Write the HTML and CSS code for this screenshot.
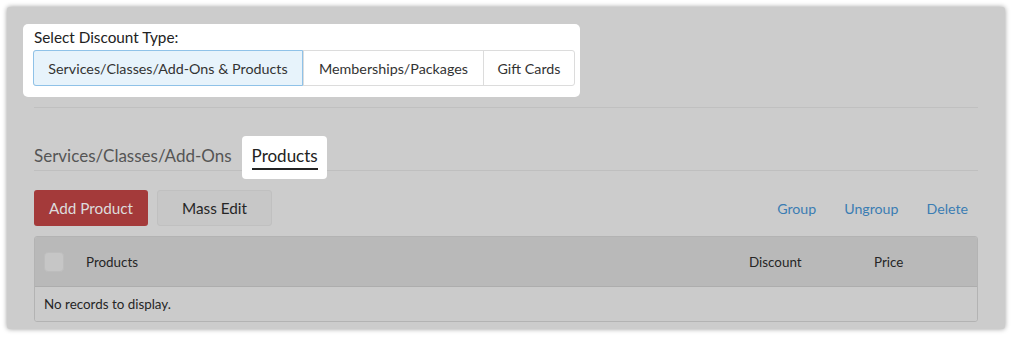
FILE: index.html
```html
<!DOCTYPE html>
<html>
<head>
<meta charset="utf-8">
<link rel="stylesheet" href="styles.css">
</head>
<body>
<div class="panel">
  <div class="discount-box">
    <div class="discount-label">Select Discount Type:</div>
    <div class="seg">
      <div class="seg-btn active">Services/Classes/Add-Ons &amp; Products</div>
      <div class="seg-btn">Memberships/Packages</div>
      <div class="seg-btn">Gift Cards</div>
    </div>
  </div>
  <div class="divider"></div>
  <div class="tabs">
    <div class="tab">Services/Classes/Add-Ons</div>
    <div class="tab active"><span class="tab-text">Products</span></div>
  </div>
  <div class="toolbar">
    <div class="btn btn-red">Add Product</div>
    <div class="btn btn-grey">Mass Edit</div>
    <div class="links">
      <span class="link">Group</span>
      <span class="link">Ungroup</span>
      <span class="link">Delete</span>
    </div>
  </div>
  <div class="table">
    <div class="thead">
      <div class="cell-check"><span class="checkbox"></span></div>
      <div class="cell-name">Products</div>
      <div class="cell-disc">Discount</div>
      <div class="cell-price">Price</div>
    </div>
    <div class="tbody">No records to display.</div>
  </div>
</div>
</body>
</html>
```
FILE: styles.css
```css
*, *::before, *::after {
  box-sizing: border-box;
}
html, body {
  margin: 0;
  padding: 0;
  background: #ffffff;
}
body {
  font-family: Lato, "Liberation Sans", sans-serif;
  color: #262626;
  padding: 7px 9px 8px 7px;
}
.panel {
  width: 998px;
  height: 322px;
  background: #cccccc;
  border-radius: 3px;
  box-shadow: 0 0 5px rgba(0, 0, 0, 0.4);
  padding: 17px 27px 0 27px;
}
.discount-box {
  display: inline-block;
  margin-left: -11px;
  width: 557px;
  background: #ffffff;
  border-radius: 5px;
  padding: 4px 5px 11px 10px;
}
.discount-label {
  font-size: 15.3px;
  line-height: 19px;
  padding-left: 1px;
  margin-bottom: 3px;
  color: #222;
}
.seg {
  display: flex;
  height: 36px;
  border: 1px solid #dcdcdc;
  border-radius: 3px;
}
.seg-btn {
  display: flex;
  align-items: center;
  justify-content: center;
  font-size: 14.3px;
  color: #333;
  border-left: 1px solid #dcdcdc;
}
.seg-btn:nth-child(1) { width: 269px; border-left: none; }
.seg-btn:nth-child(2) { width: 180px; }
.seg-btn:nth-child(3) { flex: 1; }
.seg-btn.active {
  background: #e7f3fb;
  margin: -1px 0 -1px -1px;
  width: 270px;
  border: 1px solid #8fc2e8;
  border-radius: 3px 0 0 3px;
}
.divider {
  margin-top: 10px;
  height: 1px;
  background: #c0c0c0;
}
.tabs {
  display: flex;
  gap: 20px;
  margin-top: 38px;
  border-bottom: 1px solid #bfbfbf;
}
.tab {
  font-size: 17px;
  line-height: 20px;
  padding-bottom: 4px;
  color: #555;
}
.tab.active {
  position: relative;
  z-index: 0;
  color: #222;
  padding-bottom: 0;
}
.tab-text {
  display: block;
  padding-bottom: 2px;
  border-bottom: 2px solid #222;
}
.tab.active::before {
  content: "";
  position: absolute;
  top: -10px;
  left: -10px;
  right: -9px;
  bottom: -9px;
  background: #ffffff;
  border-radius: 4px;
  z-index: -1;
}
.toolbar {
  display: flex;
  align-items: center;
  gap: 9px;
  margin-top: 19px;
}
.btn {
  height: 36px;
  display: flex;
  align-items: center;
  justify-content: center;
  font-size: 15.3px;
  border-radius: 3px;
}
.btn-red {
  width: 114px;
  background: #a43a3a;
  color: #dcdcdc;
}
.btn-grey {
  width: 115px;
  background: #c7c7c7;
  border: 1px solid #c0c0c0;
  color: #262626;
}
.links {
  margin-left: auto;
  display: flex;
  gap: 28px;
  padding-right: 10px;
}
.link {
  font-size: 14.2px;
  color: #3b7db3;
}
.table {
  margin-top: 10px;
  border: 1px solid #b3b3b3;
  border-radius: 3px;
  overflow: hidden;
}
.thead {
  display: flex;
  align-items: center;
  height: 50px;
  background: #b9b9b9;
  border-bottom: 1px solid #adadad;
  font-size: 13.4px;
}
.cell-check {
  width: 51px;
  padding-left: 9px;
  display: flex;
  align-items: center;
}
.checkbox {
  width: 20px;
  height: 20px;
  background: #c6c6c6;
  border: 1px solid #bdbdbd;
  border-radius: 4px;
}
.cell-name { flex: 1; }
.cell-disc { width: 125px; }
.cell-price { width: 103px; }
.tbody {
  height: 34px;
  display: flex;
  align-items: center;
  padding-left: 9px;
  font-size: 13.4px;
  background: #cbcbcb;
}
```
